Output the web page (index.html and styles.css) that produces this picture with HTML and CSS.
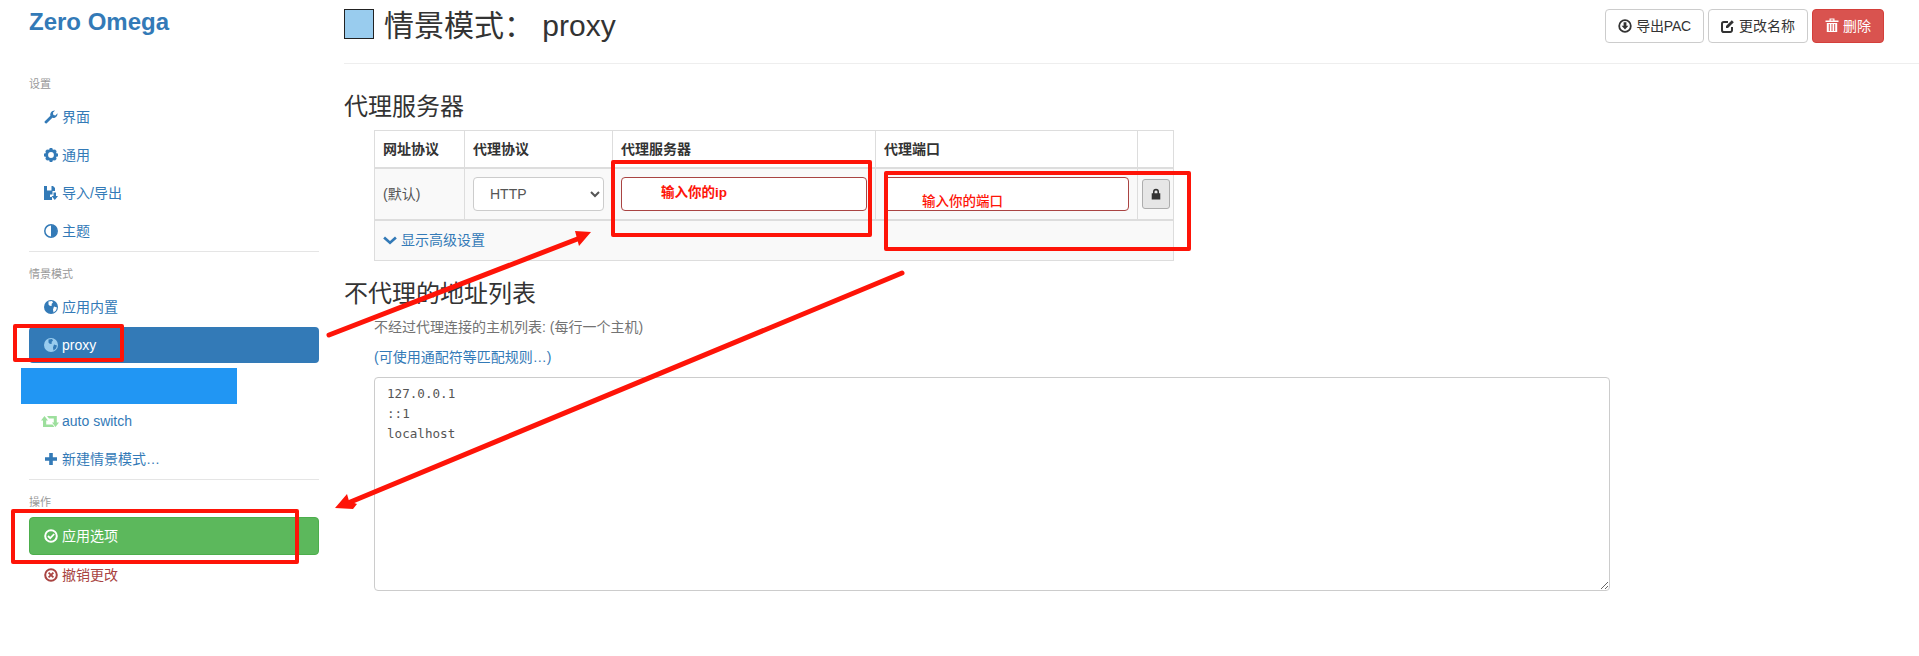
FILE: index.html
```html
<!DOCTYPE html>
<html lang="zh-CN">
<head>
<meta charset="utf-8">
<title>Zero Omega</title>
<link rel="stylesheet" href="styles.css">
</head>
<body>
<div class="app">
  <aside class="sidebar">
    <div class="brand">Zero Omega</div>
    <div class="nav-label first">设置</div>
    <a class="nav-item"><svg class="ico" viewBox="0 0 14 14"><path d="M0.600 11.600 6.400 5.800C5.800 3.400 7.600 0.400 11 0.600L8.900 2.800 9.400 4.900 11.400 5.400 13.500 3.200C13.800 6.600 10.800 8.400 8.400 7.800L2.500 13.500C1.600 14 0.100 12.600 0.600 11.600Z"/></svg>界面</a>
    <a class="nav-item"><svg class="ico" viewBox="0 0 14 14"><circle cx="7" cy="7" r="4.400" fill="none" stroke="currentColor" stroke-width="3"/><path d="M5.600 0h2.800v3H5.600zM5.600 11h2.800v3H5.600zM0 5.600h3v2.800H0zM11 5.600h3v2.800h-3zM1.200 3.200l2-2 2 2-2 2zM8.800 10.800l2-2 2 2-2 2zM10.800 1.200l2 2-2 2-2-2zM3.200 8.800l2 2-2 2-2-2z"/></svg>通用</a>
    <a class="nav-item"><svg class="ico" viewBox="0 0 14 14"><path d="M0 0h3v4.500h4.500V0H9l2 2v3H8.500v3.500H6V11h2v3H0z"/><path d="M9.500 6.500h2.500v3.500H14L10.800 14 7.500 10h2z"/></svg>导入/导出</a>
    <a class="nav-item"><svg class="ico" viewBox="0 0 14 14"><circle cx="7" cy="7" r="6.200" fill="none" stroke="currentColor" stroke-width="1.500"/><path d="M7 1a6 6 0 0 1 0 12z"/></svg>主题</a>
    <hr class="nav-rule">
    <div class="nav-label">情景模式</div>
    <a class="nav-item"><svg class="ico" viewBox="0 0 14 14"><circle cx="7" cy="7" r="7"/><path fill="#fff" d="M4.500 1.500 8 1 9 2.500 7.500 4 8 5.500 6 6 4.500 4.500zM10 6.500 13 7.500 12 10.500 9.500 12.500 9 9.500z"/></svg>应用内置</a>
    <a class="nav-item active"><svg class="ico globe-light" viewBox="0 0 14 14"><circle cx="7" cy="7" r="7"/><path fill="#337ab7" d="M4.500 1.500 8 1 9 2.500 7.500 4 8 5.500 6 6 4.500 4.500zM10 6.500 13 7.500 12 10.500 9.500 12.500 9 9.500z"/></svg>proxy</a>
    <a class="nav-item">&nbsp;</a>
    <a class="nav-item"><svg class="ico wide green-ico" viewBox="0 0 18 14"><path d="M0 6.500 3.500 2 7 6.500H5.200v4h6.300L13.500 13H2V6.500zM6 2h9.800v6.500H18L14.500 13 11 8.500h1.800v-4H8z"/></svg>auto switch</a>
    <a class="nav-item"><svg class="ico" viewBox="0 0 14 14"><path d="M5.200 1h3.600v4.200H13v3.600H8.800V13H5.200V8.800H1V5.200h4.200z"/></svg>新建情景模式…</a>
    <hr class="nav-rule">
    <div class="nav-label">操作</div>
    <a class="nav-item apply"><svg class="ico" viewBox="0 0 14 14"><circle cx="7" cy="7" r="5.800" fill="none" stroke="currentColor" stroke-width="2"/><path d="M4 7l2.200 2.200L10.200 5" fill="none" stroke="currentColor" stroke-width="1.800"/></svg>应用选项</a>
    <a class="nav-item revert"><svg class="ico" viewBox="0 0 14 14"><circle cx="7" cy="7" r="5.800" fill="none" stroke="currentColor" stroke-width="2"/><path d="M4.600 4.600l4.800 4.800M9.400 4.600l-4.800 4.800" fill="none" stroke="currentColor" stroke-width="1.800"/></svg>撤销更改</a>
  </aside>

  <main class="main">
    <header class="page-header">
      <div class="page-title"><span class="swatch"></span><h1>情景模式： <span>proxy</span></h1></div>
      <div class="actions">
        <button class="btn tight"><svg class="btn-ico" viewBox="0 0 14 14"><circle cx="7" cy="7" r="5.800" fill="none" stroke="currentColor" stroke-width="1.800"/><path d="M5.600 3.200h2.800v3.600h2L7 10.600 3.600 6.800h2z"/></svg>导出PAC</button>
        <button class="btn"><svg class="btn-ico" viewBox="0 0 14 14"><path d="M11 8v3.200A1.800 1.800 0 0 1 9.200 13H2.800A1.800 1.800 0 0 1 1 11.200V4.800A1.800 1.800 0 0 1 2.800 3H7" fill="none" stroke="currentColor" stroke-width="2"/><path d="M5 7 10.800 1.200 12.800 3.200 7 9H5z"/></svg>更改名称</button>
        <button class="btn danger"><svg class="btn-ico trash" viewBox="0 0 14 14"><path d="M0.500 2.500H4.500V0.500h5V2.500h4V4H0.500zM5.700 1.600V2.500h2.600V1.600zM1.800 5h10.400v9H1.800z" fill-rule="evenodd"/><path class="stripes" d="M4.300 6v7M7 6v7M9.700 6v7"/></svg>删除</button>
      </div>
    </header>

    <h3 class="section-title first">代理服务器</h3>
    <table class="proxy-table">
      <colgroup><col class="c1"><col class="c2"><col class="c3"><col class="c4"><col class="c5"></colgroup>
      <thead>
        <tr><th>网址协议</th><th>代理协议</th><th>代理服务器</th><th>代理端口</th><th></th></tr>
      </thead>
      <tbody>
        <tr class="data-row">
          <td>(默认)</td>
          <td><select class="control"><option>HTTP</option></select></td>
          <td><input class="control error" type="text"></td>
          <td><input class="control error" type="text"></td>
          <td class="lock-cell"><button class="lock"><svg viewBox="0 0 14 14" width="12" height="12"><path d="M3.500 6V4.500a3.500 3.500 0 0 1 7 0V6H12v7.500H2V6zM5.300 6h3.400V4.500a1.700 1.700 0 0 0-3.400 0z" fill-rule="evenodd"/></svg></button></td>
        </tr>
        <tr class="more-row">
          <td colspan="5"><a class="more"><svg class="chev" viewBox="0 0 14 10"><path d="M2 1.500 7 6 12 1.500 13.800 3.400 7 9.500 0.200 3.400z"/></svg>显示高级设置</a></td>
        </tr>
      </tbody>
    </table>

    <h3 class="section-title second">不代理的地址列表</h3>
    <div class="indent">
      <p class="help">不经过代理连接的主机列表: (每行一个主机)</p>
      <p class="link-line"><a>(可使用通配符等匹配规则…)</a></p>
      <textarea class="bypass" spellcheck="false">127.0.0.1
::1
localhost</textarea>
    </div>
  </main>
</div>

<div class="cover-rect"></div>
<span class="note note-ip">输入你的ip</span>
<span class="note note-port">输入你的端口</span>
<svg class="marks" viewBox="0 0 1919 656" width="1919" height="656">
  <g class="mark-boxes">
    <rect x="15" y="326" width="107" height="34"/>
    <rect x="13" y="511" width="284" height="51"/>
    <rect x="613" y="162" width="257" height="73"/>
    <rect x="886" y="173" width="303" height="76"/>
  </g>
  <g class="mark-lines">
    <path d="M329 335 580 238"/>
    <path d="M902 273 348 503"/>
  </g>
  <path class="mark-heads" d="M591 232 575 231 579 246zM335 508 347 494 349 501 357 504 353 509z"/>
</svg>
</body>
</html>
```

FILE: styles.css
```css
* { box-sizing: border-box; }
html, body { margin: 0; padding: 0; }
body {
  width: 1919px;
  height: 656px;
  overflow: hidden;
  position: relative;
  background: #fff;
  color: #333;
  font: 14px/20px "Liberation Sans", "Noto Sans CJK SC", sans-serif;
}
a { color: #337ab7; text-decoration: none; }
.app { display: flex; align-items: flex-start; }

.sidebar { width: 344px; padding: 8px 25px 0 29px; flex: none; }
.brand { font-size: 24px; line-height: 28px; font-weight: 700; color: #337ab7; }
.nav-label { height: 20px; line-height: 20px; font-size: 11px; color: #999; margin-bottom: 5px; }
.nav-label.first { margin-top: 38px; }
.nav-item {
  display: flex;
  align-items: center;
  height: 36px;
  margin-bottom: 2px;
  padding-left: 15px;
  border-radius: 4px;
  color: #337ab7;
}
.ico { width: 14px; height: 14px; margin-right: 4px; fill: currentColor; flex: none; }
.ico.wide { width: 18px; margin-left: -3px; margin-right: 3px; }
.green-ico { color: #9ddf9d; }
.globe-light { color: #99ccee; }
.nav-item.active { background: #337ab7; color: #fff; }
.nav-item.apply { background: #5cb85c; border: 1px solid #4cae4c; color: #fff; height: 38px; padding-left: 14px; }
.nav-item.revert { color: #a94442; }
.nav-rule { border: 0; border-top: 1px solid #e5e5e5; margin: 0 0 12px; }

.main { flex: 1; min-width: 0; }
.page-header {
  height: 64px;
  display: flex;
  justify-content: space-between;
  align-items: flex-start;
  padding: 9px 35px 0 0;
  border-bottom: 1px solid #eee;
}
.page-title { display: flex; align-items: flex-start; }
.swatch { width: 30px; height: 30px; background: #99ccee; border: 1px solid #222; margin-right: 10px; }
h1 { margin: 0; font-size: 30px; line-height: 34px; font-weight: 400; color: #333; white-space: pre; }
.actions { display: flex; gap: 4px; }
.btn {
  display: flex;
  align-items: center;
  justify-content: center;
  height: 34px;
  padding: 0 12px;
  border: 1px solid #ccc;
  border-radius: 4px;
  background: #fff;
  color: #333;
  font: inherit;
}
.btn.tight { letter-spacing: -0.2px; }
.btn.danger { background: #d9534f; border-color: #d43f3a; color: #fff; }
.btn-ico { width: 14px; height: 14px; margin-right: 4px; fill: currentColor; }
.btn-ico.trash { margin-top: -2px; }
.stripes { fill: none; stroke: #d9534f; stroke-width: 1; }

.section-title { margin: 0; font-size: 24px; line-height: 26px; font-weight: 400; color: #333; }
.section-title.first { margin-top: 30px; margin-bottom: 10px; }
.section-title.second { margin-top: 20px; margin-bottom: 10px; }

.proxy-table {
  width: 799px;
  margin-left: 30px;
  table-layout: fixed;
  border-collapse: collapse;
  border: 1px solid #ddd;
}
.c1 { width: 90px; } .c2 { width: 148px; } .c3 { width: 263px; } .c4 { width: 262px; } .c5 { width: 36px; }
.proxy-table th, .proxy-table td { border: 1px solid #ddd; padding: 0 8px; text-align: left; }
.proxy-table th { height: 37px; border-bottom-width: 2px; font-weight: 700; }
.data-row td { height: 52px; background: #f9f9f9; border-bottom-width: 2px; color: #555; }
.more-row td { height: 41px; background: #f9f9f9; }
.control {
  display: block;
  width: 100%;
  height: 34px;
  padding: 6px 12px;
  border: 1px solid #ccc;
  border-radius: 4px;
  background: #fff;
  color: #555;
  font: inherit;
}
.control.error { border-color: #a94442; }
.proxy-table .lock-cell { padding: 0 3px 0 4px; }
.lock {
  display: flex;
  align-items: center;
  justify-content: center;
  width: 28px;
  height: 30px;
  padding: 0;
  background: #e6e6e6;
  border: 1px solid #adadad;
  border-radius: 3px;
  fill: #333;
}
.more { display: flex; align-items: center; }
.chev { width: 14px; height: 10px; fill: #337ab7; margin-right: 4px; }

.indent { margin-left: 30px; }
.help { margin: 0 0 10px; color: #737373; }
.link-line { margin: 0 0 10px; }
.bypass {
  display: block;
  width: 1236px;
  height: 214px;
  padding: 6px 12px;
  border: 1px solid #ccc;
  border-radius: 4px;
  background: #fff;
  color: #555;
  font: 12.6px/20px "DejaVu Sans Mono", monospace;
  outline: 0;
}

.cover-rect { position: absolute; left: 21px; top: 368px; width: 216px; height: 36px; background: #2196f3; }
.note { position: absolute; color: #fe1408; font-size: 13.5px; line-height: 18px; white-space: nowrap; }
.note-ip { left: 661px; top: 184px; font-weight: 700; }
.note-port { left: 922px; top: 193px; font-weight: 500; }
.marks { position: absolute; left: 0; top: 0; pointer-events: none; }
.mark-boxes rect { fill: none; stroke: #fe1408; stroke-width: 4; stroke-linejoin: round; }
.mark-lines path { fill: none; stroke: #fe1408; stroke-width: 5; stroke-linecap: round; }
.mark-heads { fill: #fe1408; }
```
